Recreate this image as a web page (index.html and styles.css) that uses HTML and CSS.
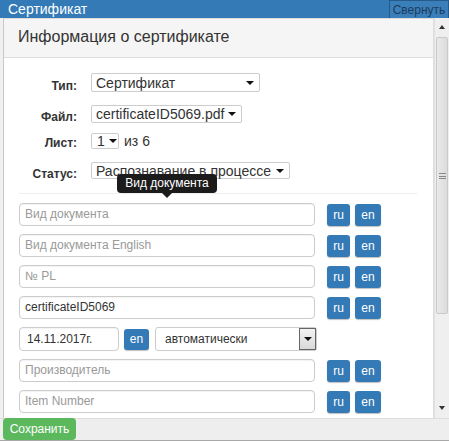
FILE: index.html
```html
<!DOCTYPE html>
<html lang="ru">
<head>
<meta charset="utf-8">
<title>Сертификат</title>
<link rel="stylesheet" href="styles.css">
</head>
<body>
<div class="topbar">
  <span class="title">Сертификат</span>
  <button class="collapse">Свернуть</button>
</div>
<div class="main">
  <div class="viewport">
    <div class="panel">
      <div class="panel-heading">Информация о сертификате</div>
      <div class="panel-body">
        <div class="meta-row r1">
          <label class="lbl">Тип:</label>
          <div class="sel w1"><span>Сертификат</span><i class="caret"></i></div>
        </div>
        <div class="meta-row r2">
          <label class="lbl">Файл:</label>
          <div class="sel w2"><span>certificateID5069.pdf</span><i class="caret"></i></div>
        </div>
        <div class="meta-row r3">
          <label class="lbl">Лист:</label>
          <div class="sel w3"><span>1</span><i class="caret"></i></div>
          <span class="of">из 6</span>
        </div>
        <div class="meta-row r4">
          <label class="lbl">Статус:</label>
          <div class="sel w4"><span>Распознавание в процессе</span><i class="caret"></i></div>
          <div class="tooltip">Вид документа</div>
        </div>
        <div class="divider"></div>
        <div class="fields">
          <div class="frow">
            <div class="inp wide ph">Вид документа</div>
            <button class="btn">ru</button><button class="btn en">en</button>
          </div>
          <div class="frow">
            <div class="inp wide ph">Вид документа English</div>
            <button class="btn">ru</button><button class="btn en">en</button>
          </div>
          <div class="frow">
            <div class="inp wide ph">№ PL</div>
            <button class="btn">ru</button><button class="btn en">en</button>
          </div>
          <div class="frow">
            <div class="inp wide">certificateID5069</div>
            <button class="btn">ru</button><button class="btn en">en</button>
          </div>
          <div class="frow date-row">
            <div class="inp date">14.11.2017г.</div>
            <button class="btn en small">en</button>
            <div class="osel"><span>автоматически</span><span class="obox"><i class="caret"></i></span></div>
          </div>
          <div class="frow">
            <div class="inp wide ph">Производитель</div>
            <button class="btn">ru</button><button class="btn en">en</button>
          </div>
          <div class="frow">
            <div class="inp wide ph">Item Number</div>
            <button class="btn">ru</button><button class="btn en">en</button>
          </div>
        </div>
      </div>
    </div>
  </div>
  <div class="scrollbar">
    <div class="arrow up"></div>
    <div class="thumb"><span class="grip"></span></div>
    <div class="track"></div>
    <div class="arrow down"></div>
  </div>
</div>
<div class="footer">
  <button class="save">Сохранить</button>
</div>
<div class="edge"></div>
</body>
</html>
```
FILE: styles.css
```css
* { box-sizing: border-box; }
html, body { margin: 0; padding: 0; }
body {
  width: 449px;
  height: 442px;
  overflow: hidden;
  font-family: "Liberation Sans", Arial, sans-serif;
  color: #333;
  background: #fff;
}
button { font-family: inherit; cursor: default; }

.topbar {
  height: 18px;
  background: #337ab7;
  display: flex;
  justify-content: space-between;
  align-items: stretch;
}
.title {
  color: #fff;
  font-size: 14px;
  line-height: 18px;
  padding-left: 8px;
}
.collapse {
  width: 60px;
  margin: 0;
  padding: 0;
  border: 1px solid #265a88;
  border-bottom: none;
  background: #3b7fba;
  color: #1b3c5f;
  font-size: 12px;
  line-height: 16px;
}

.main {
  height: 400px;
  display: flex;
}
.viewport {
  width: 434px;
  padding-left: 3px;
  background: #f0f0f0;
  overflow: hidden;
}
.panel {
  width: 431px;
  height: 401px;
  border: 1px solid #ddd;
  border-left-color: #c8c8c8;
  border-bottom: none;
  background: #fff;
}
.panel-heading {
  height: 39px;
  background: #f5f5f5;
  border-bottom: 1px solid #ddd;
  font-size: 16px;
  line-height: 36px;
  padding-left: 14px;
  color: #333;
}
.panel-body {
  padding: 0 15px 0 15px;
}

.meta-row {
  display: flex;
  align-items: center;
  margin-left: -15px;
  position: relative;
}
.r1 { margin-top: 15px; height: 19px; }
.r2 { margin-top: 13px; height: 18px; }
.r3 { margin-top: 10px; height: 16px; }
.r4 { margin-top: 13px; height: 17px; }
.lbl {
  width: 73px;
  text-align: right;
  font-weight: bold;
  font-size: 12px;
  line-height: 14px;
  padding-top: 6px;
  margin-right: 14px;
  color: #333;
}
.r3 .lbl { padding-top: 3px; }
.sel {
  height: 100%;
  display: flex;
  align-items: center;
  justify-content: space-between;
  border: 1px solid #ccc;
  border-radius: 2px;
  background: #fff;
  font-size: 14px;
  line-height: 14px;
  padding: 0 5px 0 4px;
  color: #333;
}
.w1 { width: 169px; }
.w2 { width: 151px; }
.w3 { width: 28px; padding-left: 5px; }
.w4 { width: 199px; }
.caret {
  display: inline-block;
  width: 0;
  height: 0;
  border-left: 4px solid transparent;
  border-right: 4px solid transparent;
  border-top: 4px solid #111;
  margin-left: 4px;
}
.of {
  font-size: 14px;
  margin-left: 5px;
}

.tooltip {
  position: absolute;
  left: 113px;
  top: 12px;
  width: 100px;
  height: 19px;
  background: #1b1b1b;
  color: #fff;
  border-radius: 4px;
  font-size: 12px;
  line-height: 19px;
  text-align: center;
  z-index: 2;
}
.tooltip::after {
  content: "";
  position: absolute;
  left: 45px;
  bottom: -5px;
  border-left: 5px solid transparent;
  border-right: 5px solid transparent;
  border-top: 5px solid #1b1b1b;
}

.divider {
  margin-top: 14px;
  height: 1px;
  background: #eee;
  width: 398px;
}
.fields {
  padding-top: 9px;
}
.frow {
  display: flex;
  align-items: flex-start;
  height: 23px;
  margin-bottom: 8px;
}
.inp {
  height: 23px;
  border: 1px solid #ccc;
  border-radius: 4px;
  font-size: 12px;
  line-height: 21px;
  padding-left: 5px;
  color: #333;
  background: #fff;
  box-shadow: inset 0 1px 1px rgba(0,0,0,.05);
}
.inp.ph { color: #999; }
.wide { width: 296px; margin-right: 12px; }
.btn {
  margin: 1px 0 0 0;
  height: 22px;
  width: 23px;
  padding: 0;
  border: none;
  border-radius: 3px;
  background: #337ab7;
  color: #fff;
  font-size: 12px;
  line-height: 22px;
  box-shadow: 0 1px 1px rgba(0,0,0,.25);
}
.btn.en { width: 26px; margin-left: 5px; }

.date-row { height: 24px; }
.inp.date { width: 100px; height: 24px; padding-left: 7px; line-height: 22px; }
.btn.small { width: 25px; height: 21px; margin-top: 2px; line-height: 21px; }
.osel {
  width: 162px;
  height: 24px;
  margin-left: 6px;
  border: 1px solid #ccc;
  border-radius: 3px;
  display: flex;
  align-items: center;
  justify-content: space-between;
  font-size: 12px;
  padding-left: 9px;
  color: #333;
}
.obox {
  width: 17px;
  height: 22px;
  border: 1px solid #666;
  background: linear-gradient(#f4f4f4, #d8d8d8);
  display: flex;
  align-items: center;
  justify-content: center;
}
.obox .caret { margin: 0; border-top-width: 4px; border-left-width: 4px; border-right-width: 4px; }

.scrollbar {
  width: 15px;
  height: 400px;
  background: #efefef;
  border-left: 1px solid #e2e2e2;
  display: flex;
  flex-direction: column;
  align-items: center;
}
.arrow {
  width: 0;
  height: 0;
  border-left: 3px solid transparent;
  border-right: 3px solid transparent;
}
.arrow.up { margin-top: 7px; border-bottom: 4px solid #333; }
.arrow.down { margin-bottom: 8px; border-top: 4px solid #333; }
.thumb {
  margin-top: 8px;
  width: 12px;
  height: 277px;
  border: 1px solid #c9c9c9;
  border-radius: 2px;
  background: linear-gradient(90deg, #e9e9e9, #dcdcdc);
  display: flex;
  align-items: center;
  justify-content: center;
}
.grip {
  width: 7px;
  height: 6px;
  border-top: 1px solid #888;
  border-bottom: 1px solid #888;
  position: relative;
}
.grip::after {
  content: "";
  position: absolute;
  left: 0;
  right: 0;
  top: 2px;
  border-top: 1px solid #888;
}
.track { flex: 1; }

.footer {
  height: 22px;
  background: #eeeeee;
  padding-left: 3px;
  border-top: 1px solid #ddd;
}
.save {
  height: 22px;
  width: 73px;
  margin: -1px 0 0 0;
  padding: 0;
  border: none;
  border-radius: 4px;
  background: #5cb85c;
  color: #fff;
  font-size: 12px;
  line-height: 22px;
}
.edge {
  height: 2px;
  background: #fff;
  border-top: 1px solid #aaa;
}
```
